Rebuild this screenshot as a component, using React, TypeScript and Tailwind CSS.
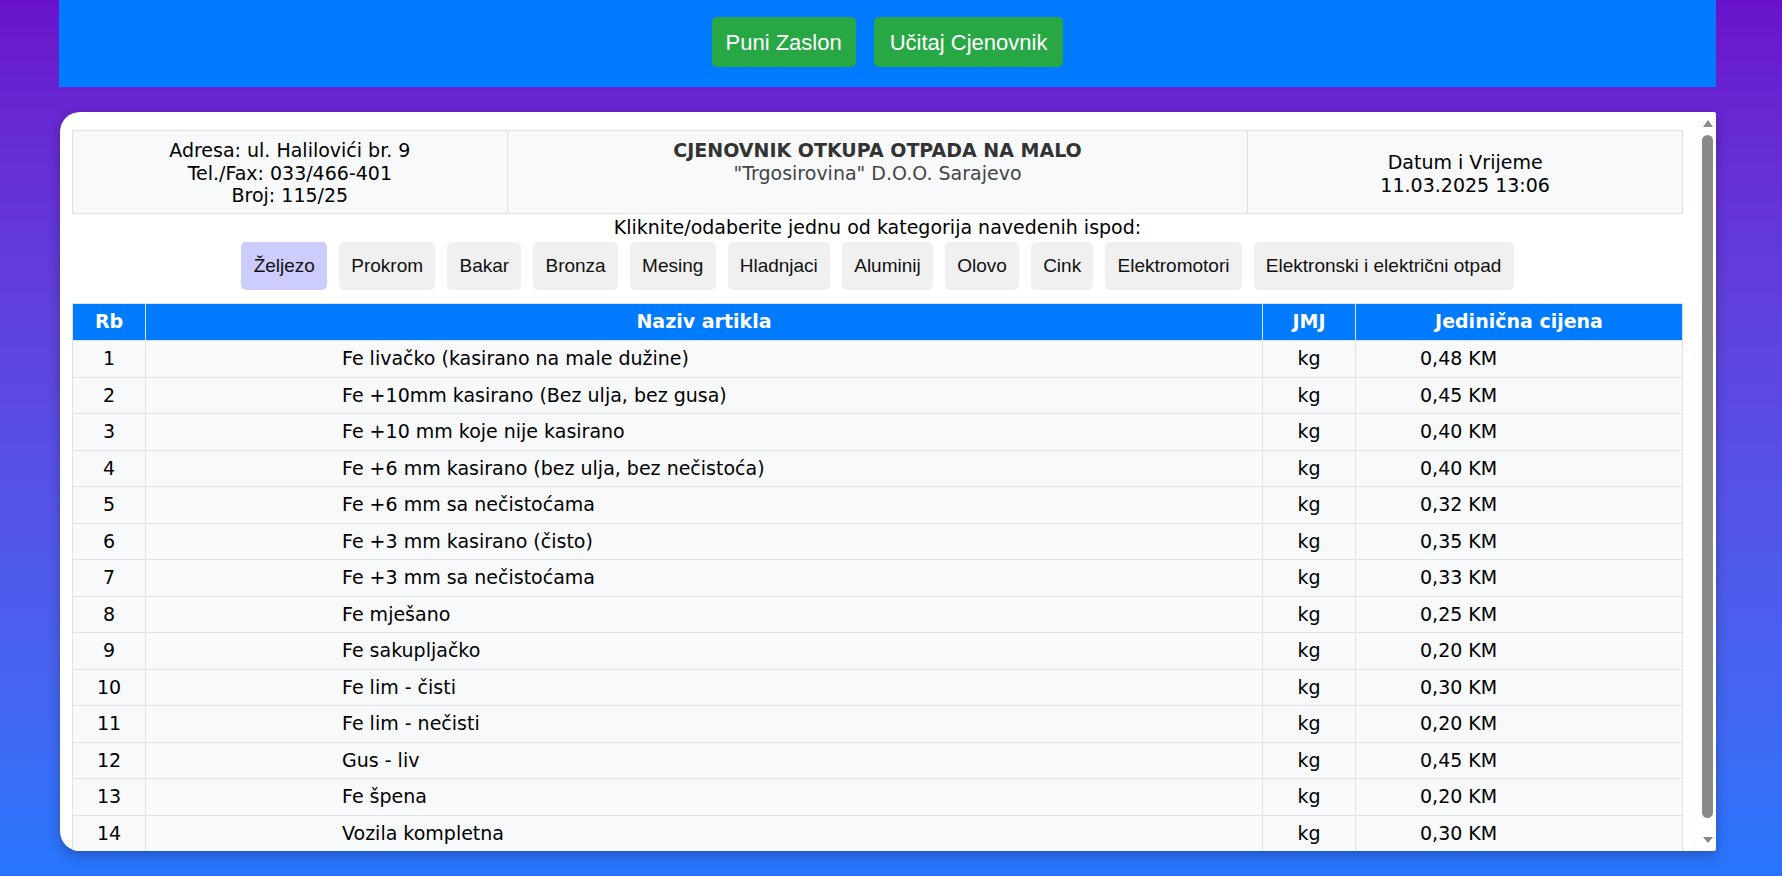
import { useState } from "react";

type Item = { rb: number; naziv: string; jmj: string; cijena: string };

const categories = ["Željezo", "Prokrom", "Bakar", "Bronza", "Mesing", "Hladnjaci", "Aluminij", "Olovo", "Cink", "Elektromotori", "Elektronski i električni otpad"];

const items: Item[] = [
  { rb: 1, naziv: "Fe livačko (kasirano na male dužine)", jmj: "kg", cijena: "0,48 KM" },
  { rb: 2, naziv: "Fe +10mm kasirano (Bez ulja, bez gusa)", jmj: "kg", cijena: "0,45 KM" },
  { rb: 3, naziv: "Fe +10 mm koje nije kasirano", jmj: "kg", cijena: "0,40 KM" },
  { rb: 4, naziv: "Fe +6 mm kasirano (bez ulja, bez nečistoća)", jmj: "kg", cijena: "0,40 KM" },
  { rb: 5, naziv: "Fe +6 mm sa nečistoćama", jmj: "kg", cijena: "0,32 KM" },
  { rb: 6, naziv: "Fe +3 mm kasirano (čisto)", jmj: "kg", cijena: "0,35 KM" },
  { rb: 7, naziv: "Fe +3 mm sa nečistoćama", jmj: "kg", cijena: "0,33 KM" },
  { rb: 8, naziv: "Fe mješano", jmj: "kg", cijena: "0,25 KM" },
  { rb: 9, naziv: "Fe sakupljačko", jmj: "kg", cijena: "0,20 KM" },
  { rb: 10, naziv: "Fe lim - čisti", jmj: "kg", cijena: "0,30 KM" },
  { rb: 11, naziv: "Fe lim - nečisti", jmj: "kg", cijena: "0,20 KM" },
  { rb: 12, naziv: "Gus - liv", jmj: "kg", cijena: "0,45 KM" },
  { rb: 13, naziv: "Fe špena", jmj: "kg", cijena: "0,20 KM" },
  { rb: 14, naziv: "Vozila kompletna", jmj: "kg", cijena: "0,30 KM" },
];

const App = () => {
  const [active, setActive] = useState("Željezo");

  return (
    <div className="h-[876px] overflow-hidden bg-linear-to-b from-[#6a11cb] to-[#2575fc] font-['DejaVu_Sans',sans-serif] text-[19px] text-black">
      {/* top bar */}
      <div className="ml-[59px] w-[1657px] h-[87px] bg-[#007bff] flex justify-center items-start gap-[18px] pt-[17px]">
        <button className="h-[50px] px-[14px] rounded-[5px] bg-[#28a745] text-white text-[22px] font-['Liberation_Sans',sans-serif]">Puni Zaslon</button>
        <button className="h-[50px] px-[16px] rounded-[5px] bg-[#28a745] text-white text-[22px] font-['Liberation_Sans',sans-serif]">Učitaj Cjenovnik</button>
      </div>

      {/* card */}
      <div className="ml-[60px] mt-[25px] w-[1656px] h-[739px] bg-white rounded-l-[20px] rounded-r-[2px] shadow-[0_4px_12px_rgba(0,0,0,0.25)] flex overflow-hidden">
        <div className="flex-1 min-w-0 pl-[12px] pr-[16px] pt-[18px]">
          <table className="w-full table-fixed border-collapse bg-[#f8f9fa] leading-[22.7px]">
            <tbody>
              <tr>
                <td className="w-[27%] border border-[#dee2e6] px-2 pt-[8px] pb-[6px] text-center align-top">
                  Adresa: ul. Halilovići br. 9
                  <br />
                  Tel./Fax: 033/466-401
                  <br />
                  Broj: 115/25
                </td>
                <td className="border border-[#dee2e6] px-2 pt-[8px] pb-[6px] text-center align-top text-[#333]">
                  <div className="font-bold">CJENOVNIK OTKUPA OTPADA NA MALO</div>
                  <div className="text-[#444]">"Trgosirovina" D.O.O. Sarajevo</div>
                </td>
                <td className="w-[27%] border border-[#dee2e6] px-2 pt-[9px] pb-[6px] text-center align-middle">
                  Datum i Vrijeme
                  <br />
                  11.03.2025 13:06
                </td>
              </tr>
            </tbody>
          </table>

          <p className="text-center leading-[22.7px] mt-[2px]">Kliknite/odaberite jednu od kategorija navedenih ispod:</p>

          <div className="flex flex-wrap justify-center gap-[12px] mt-[3px] font-['Liberation_Sans',sans-serif] text-[19px]">
            {categories.map((c) => (
              <button key={c} onClick={() => setActive(c)} className={`h-[48px] px-[12.2px] rounded-[5px] text-[#111] ${c === active ? "bg-[#ccccff]" : "bg-[#f0f0f0]"}`}>
                {c}
              </button>
            ))}
          </div>

          <table className="w-full table-fixed border-collapse mt-[13px] leading-[23.5px]">
            <thead>
              <tr className="bg-[#007bff] text-white">
                <th className="w-[73px] border border-[#dee2e6] py-[6.5px] font-bold">Rb</th>
                <th className="border border-[#dee2e6] py-[6.5px] font-bold">Naziv artikla</th>
                <th className="w-[93px] border border-[#dee2e6] py-[6.5px] font-bold">JMJ</th>
                <th className="w-[327px] border border-[#dee2e6] py-[6.5px] font-bold">Jedinična cijena</th>
              </tr>
            </thead>
            <tbody>
              {items.map((it) => (
                <tr key={it.rb} className="bg-[#f8f9fa]">
                  <td className="border border-[#dee2e6] py-[6px] text-center">{it.rb}</td>
                  <td className="border border-[#dee2e6] py-[6px] pl-[196px]">{it.naziv}</td>
                  <td className="border border-[#dee2e6] py-[6px] text-center">{it.jmj}</td>
                  <td className="border border-[#dee2e6] py-[6px] pl-[64px]">{it.cijena}</td>
                </tr>
              ))}
            </tbody>
          </table>
        </div>

        {/* scrollbar */}
        <div className="w-[17px] shrink-0 flex flex-col items-center pt-[8px] pb-[8px]">
          <svg width="10" height="7" viewBox="0 0 10 7" className="shrink-0">
            <polygon points="5,0 10,7 0,7" fill="#8a8a8a" />
          </svg>
          <div className="mt-[8px] h-[683px] w-[11px] rounded-full bg-[#8a8a8a] shrink-0" />
          <div className="flex-1" />
          <svg width="10" height="6" viewBox="0 0 10 6" className="shrink-0">
            <polygon points="0,0 10,0 5,6" fill="#8a8a8a" />
          </svg>
        </div>
      </div>
    </div>
  );
};

export default App;
